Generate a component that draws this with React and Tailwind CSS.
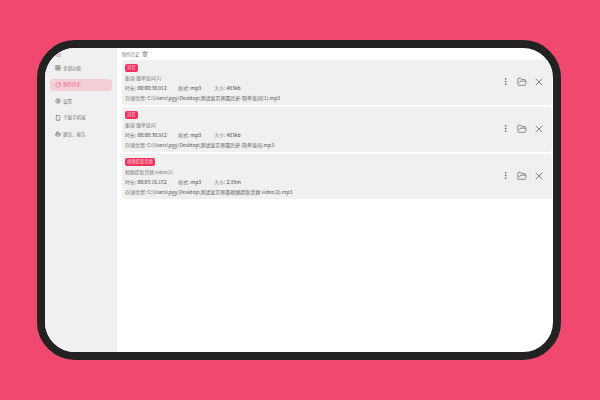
import React from "react";
import { LayoutGrid, RotateCw, Settings, Smartphone, Bot, MoreVertical, FolderOpen, X, Trash2 } from "lucide-react";

const cjk = { fontFamily: '"Noto Sans CJK SC", "Noto Sans", sans-serif' };

const navItems = [
  { label: "全部功能", Icon: LayoutGrid },
  { label: "制作历史", Icon: RotateCw, active: true },
  { label: "设置", Icon: Settings },
  { label: "下载手机端", Icon: Smartphone },
  { label: "建议、报告", Icon: Bot },
];

const records = [
  { tag: "消音", name: "集锦-跟单息间(1)", time: "00:00:30.912", size: "483kb", path: "C:\\Users\\pgy\\Desktop\\测试显示界面历史-简单息间(1).mp3" },
  { tag: "消音", name: "集锦-跟单息间", time: "00:00:30.912", size: "483kb", path: "C:\\Users\\pgy\\Desktop\\测试显示界面历史-简单息间.mp3" },
  { tag: "视频提取音频", name: "视频提取音频 video(2)", time: "00:03:16.152", size: "2.99m", path: "C:\\Users\\pgy\\Desktop\\测试显示界面视频提取音频 video(2).mp3" },
];

const RecordCard = ({ tag, name, time, size, path }) => (
  <div className="h-[45px] bg-[#f0f0f0] rounded-[2px] pl-[3px] pr-[7px] flex items-center">
    <div className="flex-1 self-start pt-[4px] flex flex-col items-start">
      <span className="h-[7.5px] px-[2px] bg-[#f0315e] rounded-[2px] text-[#ffd0dc] text-[4.3px] leading-[7.5px]">{tag}</span>
      <div className="mt-[1.5px] h-[10px] leading-[10px] text-[4.8px] text-[#777]">{name}</div>
      <div className="h-[9.5px] leading-[9.5px] flex text-[#777]">
        <span className="w-[53px]">时长: <span className="text-[#444]">{time}</span></span>
        <span className="w-[36px]">格式: <span className="text-[#444]">mp3</span></span>
        <span>大小: <span className="text-[#444]">{size}</span></span>
      </div>
      <div className="h-[10px] leading-[10px] text-[#777]">存储位置: <span className="text-[#555]">{path}</span></div>
    </div>
    <div className="flex items-center text-[#444] mb-[2px]">
      <MoreVertical size={9} strokeWidth={1.6} className="mr-[7.5px]" />
      <FolderOpen size={10} strokeWidth={1.4} className="mr-[6px]" />
      <X size={12} strokeWidth={1.3} />
    </div>
  </div>
);

const App = () => (
  <div className="w-[600px] h-[400px] bg-[#f0486e] pt-[40px] pl-[37px] overflow-hidden" style={cjk}>
    <div className="w-[524px] h-[320px] border-[8px] border-[#222222] rounded-[38px] bg-white flex overflow-hidden text-[5px]">
      <aside className="w-[72px] bg-[#f0f0f0] shrink-0 pt-[3px] px-[5px] flex flex-col text-[4.5px]">
        <div className="h-[8px] leading-[8px] pl-[6px] mb-[3px] text-[#777]">V2</div>
        <div className="flex flex-col gap-[4.5px]">
          {navItems.map(({ label, Icon, active }) => (
            <div
              key={label}
              className={`h-[12px] rounded-[4px] pl-[5px] flex items-center gap-[2px] ${active ? "bg-[#f5cfd8] text-[#e8587c]" : "text-[#777]"}`}
            >
              <Icon size={6} strokeWidth={2} className={active ? "text-[#e8466c]" : "text-[#555]"} />
              <span>{label}</span>
            </div>
          ))}
        </div>
      </aside>
      <main className="flex-1 pl-[5px] pr-[1px]">
        <div className="h-[12px] flex items-center gap-[3px] text-[#777] text-[4.3px]">
          <span>制作历史</span>
          <Trash2 size={6} strokeWidth={1.8} className="text-[#555]" />
        </div>
        <div className="flex flex-col gap-[2px]">
          {records.map((r) => (
            <RecordCard key={r.name} {...r} />
          ))}
        </div>
      </main>
    </div>
  </div>
);

export default App;
